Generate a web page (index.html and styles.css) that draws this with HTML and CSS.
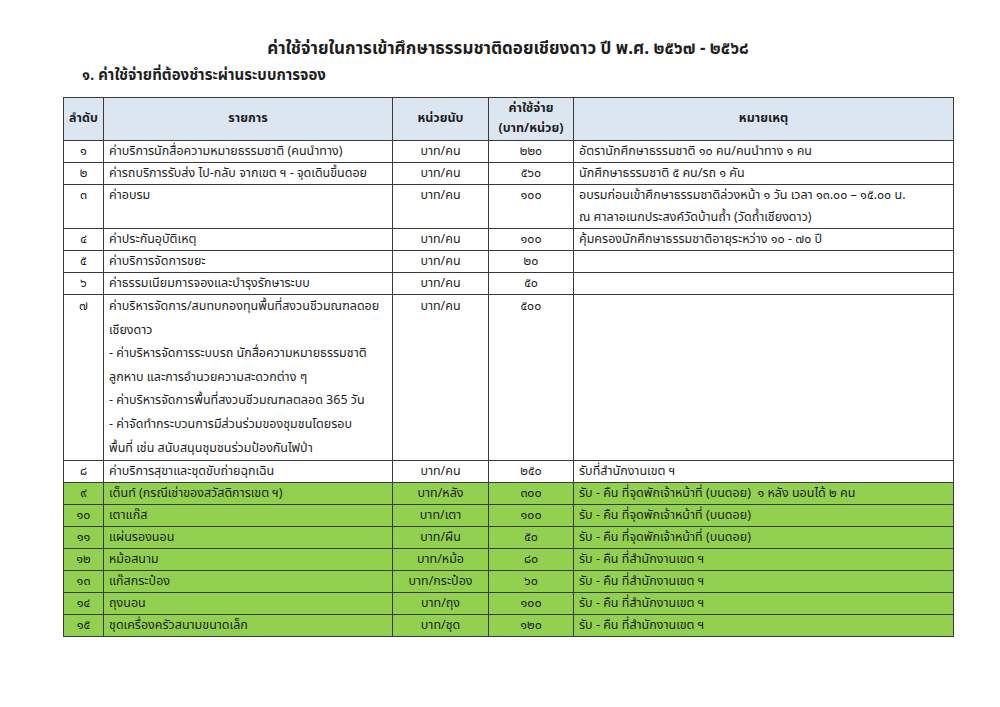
FILE: index.html
```html
<!DOCTYPE html>
<html lang="th">
<head>
<meta charset="utf-8">
<link rel="stylesheet" href="styles.css">
</head>
<body>
<div class="page">
  <h1 class="title">ค่าใช้จ่ายในการเข้าศึกษาธรรมชาติดอยเชียงดาว ปี พ.ศ. ๒๕๖๗ - ๒๕๖๘</h1>
  <h2 class="subtitle">๑. ค่าใช้จ่ายที่ต้องชำระผ่านระบบการจอง</h2>
  <table class="fees">
    <colgroup>
      <col class="c-no"><col class="c-item"><col class="c-unit"><col class="c-cost"><col class="c-note">
    </colgroup>
    <thead>
      <tr>
        <th>ลำดับ</th>
        <th>รายการ</th>
        <th>หน่วยนับ</th>
        <th>ค่าใช้จ่าย<br>(บาท/หน่วย)</th>
        <th>หมายเหตุ</th>
      </tr>
    </thead>
    <tbody>
      <tr><td class="no">๑</td><td>ค่าบริการนักสื่อความหมายธรรมชาติ (คนนำทาง)</td><td class="ctr">บาท/คน</td><td class="ctr">๒๒๐</td><td>อัตรานักศึกษาธรรมชาติ ๑๐ คน/คนนำทาง ๑ คน</td></tr>
      <tr><td class="no">๒</td><td>ค่ารถบริการรับส่ง ไป-กลับ จากเขต ฯ - จุดเดินขึ้นดอย</td><td class="ctr">บาท/คน</td><td class="ctr">๕๖๐</td><td>นักศึกษาธรรมชาติ ๕ คน/รถ ๑ คัน</td></tr>
      <tr class="two"><td class="no">๓</td><td>ค่าอบรม</td><td class="ctr">บาท/คน</td><td class="ctr">๑๐๐</td><td>อบรมก่อนเข้าศึกษาธรรมชาติล่วงหน้า ๑ วัน เวลา ๑๓.๐๐ – ๑๕.๐๐ น.<br>ณ ศาลาอเนกประสงค์วัดบ้านถ้ำ (วัดถ้ำเชียงดาว)</td></tr>
      <tr><td class="no">๔</td><td>ค่าประกันอุบัติเหตุ</td><td class="ctr">บาท/คน</td><td class="ctr">๑๐๐</td><td>คุ้มครองนักศึกษาธรรมชาติอายุระหว่าง ๑๐ - ๗๐ ปี</td></tr>
      <tr><td class="no">๕</td><td>ค่าบริการจัดการขยะ</td><td class="ctr">บาท/คน</td><td class="ctr">๒๐</td><td></td></tr>
      <tr><td class="no">๖</td><td>ค่าธรรมเนียมการจองและบำรุงรักษาระบบ</td><td class="ctr">บาท/คน</td><td class="ctr">๕๐</td><td></td></tr>
      <tr class="tall"><td class="no">๗</td><td>ค่าบริหารจัดการ/สมทบกองทุนพื้นที่สงวนชีวมณฑลดอย<br>เชียงดาว<br>- ค่าบริหารจัดการระบบรถ นักสื่อความหมายธรรมชาติ<br>ลูกหาบ และการอำนวยความสะดวกต่าง ๆ<br>- ค่าบริหารจัดการพื้นที่สงวนชีวมณฑลตลอด 365 วัน<br>- ค่าจัดทำกระบวนการมีส่วนร่วมของชุมชนโดยรอบ<br>พื้นที่ เช่น สนับสนุนชุมชนร่วมป้องกันไฟป่า</td><td class="ctr">บาท/คน</td><td class="ctr">๕๐๐</td><td></td></tr>
      <tr><td class="no">๘</td><td>ค่าบริการสุขาและชุดขับถ่ายฉุกเฉิน</td><td class="ctr">บาท/คน</td><td class="ctr">๒๕๐</td><td>รับที่สำนักงานเขต ฯ</td></tr>
      <tr class="green"><td class="no">๙</td><td>เต็นท์ (กรณีเช่าของสวัสดิการเขต ฯ)</td><td class="ctr">บาท/หลัง</td><td class="ctr">๓๐๐</td><td>รับ - คืน ที่จุดพักเจ้าหน้าที่ (บนดอย)&nbsp; ๑ หลัง นอนได้ ๒ คน</td></tr>
      <tr class="green"><td class="no">๑๐</td><td>เตาแก๊ส</td><td class="ctr">บาท/เตา</td><td class="ctr">๑๐๐</td><td>รับ - คืน ที่จุดพักเจ้าหน้าที่ (บนดอย)</td></tr>
      <tr class="green"><td class="no">๑๑</td><td>แผ่นรองนอน</td><td class="ctr">บาท/ผืน</td><td class="ctr">๕๐</td><td>รับ - คืน ที่จุดพักเจ้าหน้าที่ (บนดอย)</td></tr>
      <tr class="green"><td class="no">๑๒</td><td>หม้อสนาม</td><td class="ctr">บาท/หม้อ</td><td class="ctr">๘๐</td><td>รับ - คืน ที่สำนักงานเขต ฯ</td></tr>
      <tr class="green"><td class="no">๑๓</td><td>แก๊สกระป๋อง</td><td class="ctr">บาท/กระป๋อง</td><td class="ctr">๖๐</td><td>รับ - คืน ที่สำนักงานเขต ฯ</td></tr>
      <tr class="green"><td class="no">๑๔</td><td>ถุงนอน</td><td class="ctr">บาท/ถุง</td><td class="ctr">๑๐๐</td><td>รับ - คืน ที่สำนักงานเขต ฯ</td></tr>
      <tr class="green"><td class="no">๑๕</td><td>ชุดเครื่องครัวสนามขนาดเล็ก</td><td class="ctr">บาท/ชุด</td><td class="ctr">๑๒๐</td><td>รับ - คืน ที่สำนักงานเขต ฯ</td></tr>
    </tbody>
  </table>
</div>
</body>
</html>
```

FILE: styles.css
```css
html, body {
  margin: 0;
  padding: 0;
  background: #ffffff;
}
body {
  font-family: "Noto Sans Thai", "Noto Sans", "DejaVu Sans", sans-serif;
  color: #1e1e1e;
}
.page {
  width: 890px;
  padding: 36px 0 0 63px;
}
.title {
  margin: 0;
  font-size: 17px;
  font-weight: bold;
  text-align: center;
  line-height: 26px;
}
.subtitle {
  margin: 1px 0 8px 19px;
  font-size: 15px;
  font-weight: bold;
  line-height: 26px;
}
.fees {
  width: 890px;
  border-collapse: collapse;
  table-layout: fixed;
  font-size: 12.5px;
}
.c-no { width: 40px; }
.c-item { width: 289px; }
.c-unit { width: 96px; }
.c-cost { width: 85px; }
.c-note { width: 380px; }
.fees th, .fees td {
  border: 1px solid #3a3a3a;
  padding: 0 5px;
  vertical-align: top;
  line-height: 21px;
  white-space: nowrap;
}
.fees th {
  background: #dce6f1;
  font-weight: bold;
  text-align: center;
  vertical-align: middle;
  height: 42px;
  line-height: 20px;
}
.fees td.no, .fees td.ctr {
  text-align: center;
}
.fees tr.two td {
  line-height: 21.5px;
}
.fees tr.tall td {
  line-height: 23.6px;
}
.fees tr.green td {
  background: #92d050;
}
```
